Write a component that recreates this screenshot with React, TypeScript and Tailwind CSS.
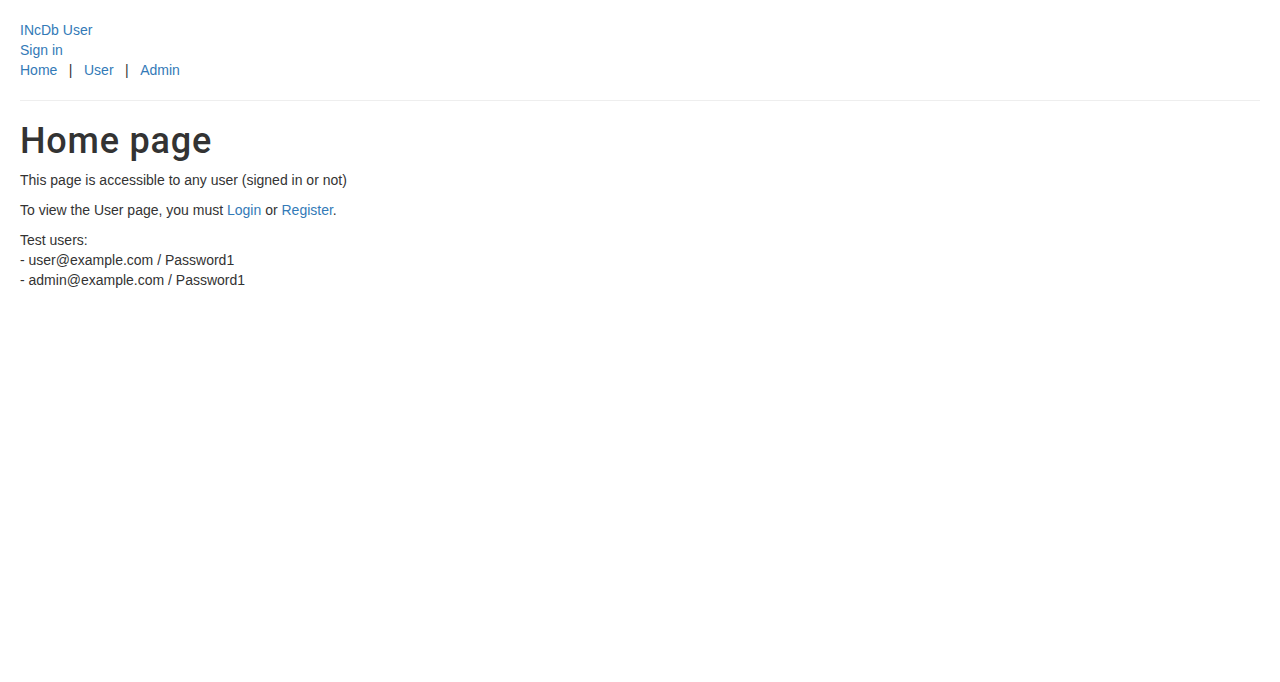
export default function App() {
  return (
    <div
      className="p-[20px] text-[14px] leading-[20px] text-[#333333] bg-white min-h-[682px]"
      style={{ fontFamily: '"Liberation Sans", Arial, sans-serif' }}
    >
      <div>
        <a href="#" className="text-[#337ab7]">INcDb User</a>
      </div>
      <div>
        <a href="#" className="text-[#337ab7]">Sign in</a>
      </div>
      <div>
        <a href="#" className="text-[#337ab7]">Home</a>
        <span className="mx-[11.5px]">|</span>
        <a href="#" className="text-[#337ab7]">User</a>
        <span className="mx-[11.5px]">|</span>
        <a href="#" className="text-[#337ab7]">Admin</a>
      </div>
      <hr className="my-[20px] border-0 border-t border-[#eeeeee]" />
      <h1
        className="mt-[20px] mb-[9px] text-[36px] leading-[40px] font-medium tracking-[0.8px]"
        style={{ fontFamily: 'Roboto, "Liberation Sans", sans-serif' }}
      >
        Home page
      </h1>
      <p className="mb-[10px]">This page is accessible to any user (signed in or not)</p>
      <p className="mb-[10px]">
        To view the User page, you must <a href="#" className="text-[#337ab7]">Login</a> or{' '}
        <a href="#" className="text-[#337ab7]">Register</a>.
      </p>
      <p className="mb-[10px]">
        Test users:
        <br />- user@example.com / Password1
        <br />- admin@example.com / Password1
      </p>
    </div>
  );
}
